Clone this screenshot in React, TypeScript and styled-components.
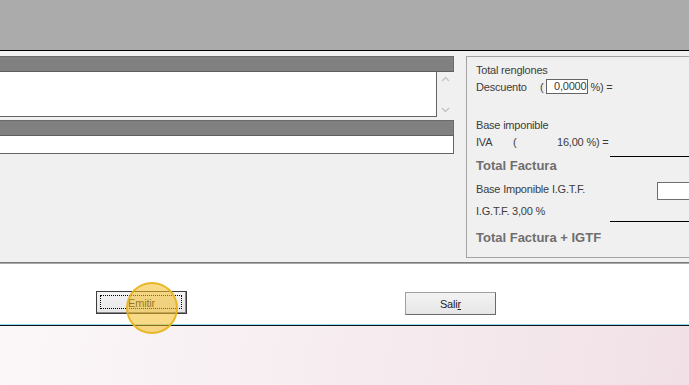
import React from "react";
import styled, { createGlobalStyle } from "styled-components";

const Global = createGlobalStyle`
  html, body {
    margin: 0;
    padding: 0;
    overflow: hidden;
  }
  body {
    width: 689px;
    height: 385px;
    font-family: "Liberation Sans", Arial, sans-serif;
    background: linear-gradient(100deg, #fcf9fa 0%, #f6ecef 55%, #f1e1e6 100%);
  }
`;

const Screen = styled.div`
  width: 689px;
  display: flex;
  flex-direction: column;
`;

const TopArea = styled.div`
  height: 50px;
  background-color: #ababab;
  border-bottom: 1px solid #000000;
`;

const Body = styled.div`
  height: 211px;
  background-color: #f0f0f0;
  display: flex;
  padding-top: 5px;
  box-sizing: border-box;
`;

const LeftColumn = styled.div`
  width: 454px;
  display: flex;
  flex-direction: column;
`;

const HeaderBar = styled.div<{ $top?: number }>`
  height: 14px;
  margin-top: ${(p) => p.$top ?? 0}px;
  background-color: #808080;
  border-top: 1px solid #6a6a6a;
  border-bottom: 1px solid #5e5e5e;
  border-right: 1px solid #6a6a6a;
`;

const MemoRow = styled.div`
  display: flex;
  height: 46px;
`;

const Memo = styled.div`
  width: 437px;
  height: 45px;
  background-color: #ffffff;
  border: 1px solid #646464;
  border-left: none;
  border-top: none;
  box-sizing: border-box;
`;

const ScrollBar = styled.div`
  flex: 1;
  display: flex;
  flex-direction: column;
  justify-content: space-between;
  align-items: center;
  padding: 4px 0 4px 0;
  box-sizing: border-box;
  height: 45px;
`;

const Chevron = ({ up }: { up?: boolean }) => (
  <svg width="9" height="6" viewBox="0 0 9 6">
    <path
      d={up ? "M1 5 L4.5 1.5 L8 5" : "M1 1 L4.5 4.5 L8 1"}
      fill="none"
      stroke="#c4c4c4"
      strokeWidth="1.4"
    />
  </svg>
);

const LineInput = styled.div`
  height: 18px;
  background-color: #ffffff;
  border: 1px solid #646464;
  border-left: none;
  border-top: none;
  box-sizing: border-box;
`;

const TotalsPanel = styled.div`
  margin-left: 12px;
  flex: 1;
  height: 202px;
  border: 1px solid #a3a3a3;
  border-right: none;
  box-sizing: border-box;
  padding: 4px 0 0 9px;
  display: flex;
  flex-direction: column;
  color: #3c3c3c;
  font-size: 11px;
  letter-spacing: -0.2px;
`;

const Row = styled.div<{ $top?: number; $h?: number }>`
  display: flex;
  align-items: center;
  height: ${(p) => p.$h ?? 17}px;
  margin-top: ${(p) => p.$top ?? 0}px;
  white-space: nowrap;
`;

const TopRow = styled(Row)`
  align-items: flex-start;
  line-height: 14px;
`;

const Label = styled.span<{ $w?: number }>`
  display: inline-block;
  width: ${(p) => (p.$w ? `${p.$w}px` : "auto")};
`;

const Percent = styled.span<{ $left?: number }>`
  margin-left: ${(p) => p.$left ?? 0}px;
`;

const SmallBox = styled.div`
  width: 42px;
  height: 15px;
  margin-left: 3px;
  background-color: #ffffff;
  border: 1px solid #646464;
  box-sizing: border-box;
  text-align: right;
  padding-right: 1px;
  line-height: 13px;
`;

const AmountBox = styled.div`
  width: 32px;
  height: 18px;
  margin-left: auto;
  background-color: #ffffff;
  border: 1px solid #6e6e6e;
  border-right: none;
  box-sizing: border-box;
`;

const Rule = styled.div<{ $top: number }>`
  height: 1px;
  margin: ${(p) => p.$top}px 0 0 134px;
  background-color: #000000;
`;

const BigLabel = styled.div<{ $top?: number }>`
  margin-top: ${(p) => p.$top ?? 0}px;
  height: 18px;
  line-height: 18px;
  font-size: 13px;
  font-weight: bold;
  letter-spacing: 0;
  color: #6e6e6e;
`;

const Separator = styled.div`
  height: 2px;
  background-color: #7a7a7a;
  border-bottom: 1px solid #a8a8a8;
  box-sizing: border-box;
`;

const Footer = styled.div`
  position: relative;
  height: 60px;
  background-color: #ffffff;
  display: flex;
  align-items: flex-start;
  padding: 27px 0 0 96px;
  box-sizing: border-box;
`;

const Button = styled.button<{ $default?: boolean; $left?: number; $top?: number }>`
  width: 91px;
  height: 23px;
  margin: ${(p) => p.$top ?? 0}px 0 0 ${(p) => p.$left ?? 0}px;
  padding: 0;
  font-family: "Liberation Sans", Arial, sans-serif;
  font-size: 11px;
  letter-spacing: -0.2px;
  color: #1e1e1e;
  background: linear-gradient(#f3f3f3, #e6e6e6);
  border: 1px solid ${(p) => (p.$default ? "#3c3c3c" : "#a0a0a0")};
  border-bottom-color: ${(p) => (p.$default ? "#3c3c3c" : "#6a6a6a")};
  border-right-color: ${(p) => (p.$default ? "#3c3c3c" : "#6a6a6a")};
  box-shadow: ${(p) => (p.$default ? "inset -1px -1px 0 #8a8a8a" : "none")};
  position: relative;
  display: flex;
  align-items: center;
  justify-content: center;
`;

const FocusRing = styled.span`
  position: absolute;
  inset: 3px 4px 4px 3px;
  border: 1px dotted #000000;
`;

const Highlight = styled.div`
  position: absolute;
  left: 126px;
  top: 18px;
  width: 52px;
  height: 52px;
  border-radius: 50%;
  background-color: rgba(244, 190, 36, 0.55);
  border: 2px solid rgba(232, 178, 28, 0.9);
  box-sizing: border-box;
  pointer-events: none;
`;

const CyanLine = styled.div`
  height: 1px;
  background-color: #8fdcf0;
`;

const BlackLine = styled.div`
  height: 1px;
  background-color: #111111;
`;

export default function App() {
  return (
    <Screen>
      <Global />
      <TopArea />
      <Body>
        <LeftColumn>
          <HeaderBar />
          <MemoRow>
            <Memo />
            <ScrollBar>
              <Chevron up />
              <Chevron />
            </ScrollBar>
          </MemoRow>
          <HeaderBar $top={2} />
          <LineInput />
        </LeftColumn>
        <TotalsPanel>
          <Row>Total renglones</Row>
          <Row>
            <Label $w={64}>Descuento</Label>
            <span>(</span>
            <SmallBox>0,0000</SmallBox>
            <Percent $left={2}>%) =</Percent>
          </Row>
          <Row $top={21}>Base imponible</Row>
          <Row>
            <Label $w={37}>IVA</Label>
            <Label $w={44}>(</Label>
            <span>16,00 %) =</span>
          </Row>
          <Rule $top={6} />
          <BigLabel>Total Factura</BigLabel>
          <TopRow $top={7} $h={18}>
            <span>Base Imponible I.G.T.F.</span>
            <AmountBox />
          </TopRow>
          <TopRow $top={4} $h={14}>
            I.G.T.F. 3,00 %
          </TopRow>
          <Rule $top={3} />
          <BigLabel $top={7}>Total Factura + IGTF</BigLabel>
        </TotalsPanel>
      </Body>
      <Separator />
      <Footer>
        <Button $default>
          <FocusRing />
          Emitir
        </Button>
        <Button $left={218} $top={1}>
          Sali<u>r</u>
        </Button>
        <Highlight />
      </Footer>
      <CyanLine />
      <BlackLine />
    </Screen>
  );
}
